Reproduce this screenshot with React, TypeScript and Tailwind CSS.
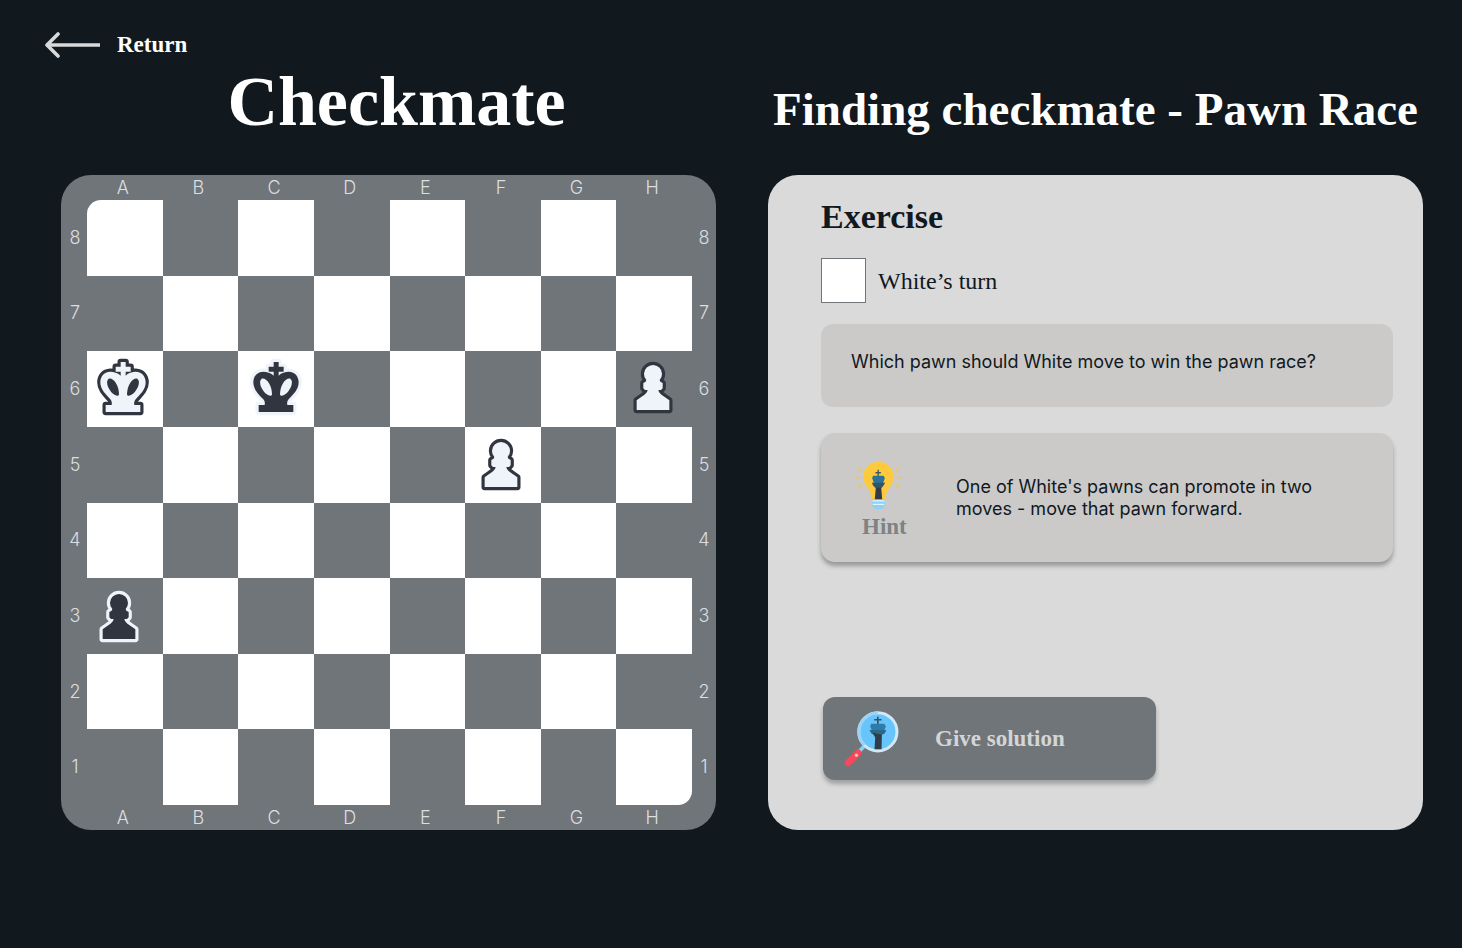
import type { ReactNode } from 'react'

type Side = 'white' | 'black'
type Kind = 'king' | 'pawn'

const files = ['A', 'B', 'C', 'D', 'E', 'F', 'G', 'H']
const ranks = [8, 7, 6, 5, 4, 3, 2, 1]

const pieces: Record<string, { kind: Kind; side: Side; className?: string }> = {
  A6: { kind: 'king', side: 'white', className: 'pr-1 pb-1' },
  C6: { kind: 'king', side: 'black', className: 'pb-1' },
  H6: { kind: 'pawn', side: 'white', className: 'pr-0.5 pb-1' },
  F5: { kind: 'pawn', side: 'white', className: 'pr-1' },
  A3: { kind: 'pawn', side: 'black', className: 'pt-0.5 pr-3' }
}

const Piece = ({ kind, side }: { kind: Kind; side: Side }) => {
  const light = '#eff4fb'
  const dark = '#31353f'
  const fill = side === 'white' ? light : dark
  const edge = side === 'white' ? dark : light
  const outline = { fill, stroke: edge, strokeWidth: 19, strokeLinejoin: 'round' as const, paintOrder: 'stroke' }

  if (kind === 'pawn') {
    return (
      <svg viewBox="-60 -12 120 159" className="w-10" role="img" aria-label={`${side} pawn`}>
        <path
          {...outline}
          d="M-20 45A27 27 0 1 1 20 45L22 50L29 54V70L24 75H16C18 86 28 91 49 106V135H-49V106C-28 91-18 86-16 75H-24L-29 70V54L-22 50Z"
        />
      </svg>
    )
  }

  return (
    <svg viewBox="-81 -12 162 174" className="w-[54px]" role="img" aria-label={`${side} king`}>
      <path
        {...outline}
        d="M-7 0H8V14H23V29H8V41C16 32 28 29 38 29C58 30 68 44 68 61C68 84 50 98 38 112C33 118 33 124 34 129H52V150H-52V129H-34C-33 124-33 118-38 112C-50 98-68 84-68 61C-68 44-58 30-38 29C-28 29-16 32-7 41V29H-22V14H-7Z"
      />
      <path fill={edge} d="M-43 50C-30 46-13 67-12 96C-12 103-18 102-24 99C-40 91-56 60-43 50Z" />
      <path fill={edge} d="M43 50C30 46 13 67 12 96C12 103 18 102 24 99C40 91 56 60 43 50Z" />
    </svg>
  )
}

const BulbIcon = () => (
  <svg viewBox="120 105 140 150" className="w-[47px]" aria-hidden="true">
    <path fill="#fdca3d" d="M190 110C216 110 236 131 236 156C236 180 212 192 209 222H171C168 192 144 180 144 156C144 131 164 110 190 110Z" />
    <path stroke="#efc65c" strokeWidth="6" strokeLinecap="round" d="M132 132L136 135M126 158H131M132 184L137 181M248 132L244 135M249 158H254M248 184L243 181" />
    <path fill="#8fd0f6" d="M171 221H209V238C209 246 200 252 190 252S171 246 171 238Z" />
    <path stroke="#e6f4fb" strokeWidth="4" d="M172 227H208M173 237H207" />
    <path stroke="#3d5661" strokeWidth="4" d="M189 134V154M181 143H197" />
    <path fill="#2c7297" d="M174 152H205L209 159L203 176H177L171 159Z" />
    <path fill="#315468" d="M170 173H210L205 181L200 188H180L174 181Z" />
    <path fill="#333b46" d="M182 186H198L201 222H179Z" />
  </svg>
)

const MagnifierIcon = () => (
  <svg viewBox="84 62 170 172" className="w-[57px]" aria-hidden="true">
    <path stroke="#8ccdf0" strokeWidth="11" d="M152 165L132 186" />
    <path stroke="#f4485d" strokeWidth="20" strokeLinecap="round" d="M129 190L99 220" />
    <circle cx="124" cy="197" r="5" fill="#f6c39a" />
    <circle cx="188" cy="127" r="57" fill="#67c5fb" stroke="#d3e8f7" strokeWidth="9" />
    <path fill="none" stroke="#9cd3f5" strokeWidth="9" d="M148 167A57 57 0 0 1 188 70" />
    <path stroke="#355264" strokeWidth="5" d="M188 82V104M177 91H199" />
    <path fill="#2d7ca9" d="M168 103H207L212 111L205 127H172L165 111Z" />
    <path fill="#2d688b" d="M163 122H213L209 131L198 137H178L168 131Z" />
    <path fill="#2f3d49" d="M172 129L200 136L199 179H178L180 144Z" />
  </svg>
)

const EdgeLabel = ({ children, className = '' }: { children: ReactNode; className?: string }) => (
  <div className={`flex items-center justify-center text-lg leading-5 font-light text-[#dcdfe1] ${className}`}>
    {children}
  </div>
)

const FileLabels = () => (
  <>
    <div />
    {files.map((file) => (
      <EdgeLabel key={file} className="pr-1">
        {file}
      </EdgeLabel>
    ))}
    <div />
  </>
)

const Board = () => (
  <div className="grid grid-cols-[26px_repeat(8,minmax(0,1fr))_24px] grid-rows-[25px_repeat(8,auto)_25px] rounded-[30px] bg-[#707579]">
    <FileLabels />
    {ranks.map((rank, row) => (
      <div key={rank} className="contents">
        <EdgeLabel className="pl-0.5">{rank}</EdgeLabel>
        {files.map((file, col) => {
          const square = `${file}${rank}`
          const piece = pieces[square]
          const isLight = (row + col) % 2 === 0
          return (
            <div
              key={square}
              className={`flex aspect-square items-center justify-center ${isLight ? 'bg-white' : 'bg-[#707579]'} ${
                square === 'A8' ? 'rounded-tl-[14px]' : ''
              } ${square === 'H1' ? 'rounded-br-[14px]' : ''} ${piece?.className ?? ''}`}
            >
              {piece && <Piece kind={piece.kind} side={piece.side} />}
            </div>
          )
        })}
        <EdgeLabel>{rank}</EdgeLabel>
      </div>
    ))}
    <FileLabels />
  </div>
)

const ExercisePanel = () => (
  <section className="flex flex-col items-start rounded-[30px] bg-[#dadada] pt-[22px] pr-[30px] pb-[50px] pl-[53px] text-[#11181e]">
    <h3 className="font-['Liberation_Serif',serif] text-[34px] leading-10 font-bold">Exercise</h3>

    {/* Side to move */}
    <div className="mt-[21px] flex items-center gap-3">
      <div className="size-[45px] border border-[#707579] bg-white" />
      <p className="font-['Liberation_Serif',serif] text-2xl leading-7">White’s turn</p>
    </div>

    {/* Question */}
    <div className="mt-[21px] w-full rounded-xl bg-[#cbcac8] px-[30px] pt-[27px] pb-[34px]">
      <p className="text-lg leading-[22px]">Which pawn should White move to win the pawn race?</p>
    </div>

    <button
      type="button"
      className="mt-[26px] flex min-h-[129px] w-full items-center rounded-[14px] bg-[#cbcac8] pr-14 pl-[34px] text-left shadow-[0_4px_4px_rgba(70,75,78,0.45)]"
    >
      <span className="flex w-[101px] shrink-0 flex-col items-start pt-2">
        <BulbIcon />
        <span className="pl-[7px] font-['Liberation_Serif',serif] text-[23px] leading-8 font-bold text-[#7d8284]">
          Hint
        </span>
      </span>
      <span className="text-lg leading-[22px]">
        One of White's pawns can promote in two moves - move that pawn forward.
      </span>
    </button>

    <button
      type="button"
      className="mt-auto ml-0.5 flex h-[83px] w-[333px] items-center gap-[35px] rounded-xl bg-[#707579] pl-5 shadow-[0_4px_4px_rgba(70,75,78,0.4)]"
    >
      <MagnifierIcon />
      <span className="font-['Liberation_Serif',serif] text-[23px] leading-8 font-bold text-[#d3d5d6]">
        Give solution
      </span>
    </button>
  </section>
)

const App = () => {
  return (
    <main className="min-h-screen bg-[#11181e] pt-[30px] pr-[39px] pb-12 pl-[61px] font-['Inter',sans-serif] [font-optical-sizing:none]">
      <a
        href="#"
        className="-ml-4 inline-flex items-center gap-[17px] align-top font-['Liberation_Serif',serif] text-[23px] leading-[30px] font-bold text-white"
      >
        <svg viewBox="0 0 55 26" className="w-[55px]" fill="none" stroke="#d9d9d9" strokeWidth="3.6" aria-hidden="true">
          <path d="M2 13H55" />
          <path strokeLinecap="round" strokeLinejoin="round" d="M13 2L2 13L13 24" />
        </svg>
        Return
      </a>

      <div className="mt-0.5 grid grid-cols-2 items-baseline gap-x-[52px] text-center font-['Liberation_Serif',serif] font-bold text-white">
        <h1 className="pl-4 text-[70px] leading-[80px]">Checkmate</h1>
        <h2 className="text-[47px] leading-[60px]">Finding checkmate - Pawn Race</h2>
      </div>

      <div className="mt-[33px] grid grid-cols-2 gap-x-[52px]">
        <Board />
        <ExercisePanel />
      </div>
    </main>
  )
}

export default App
